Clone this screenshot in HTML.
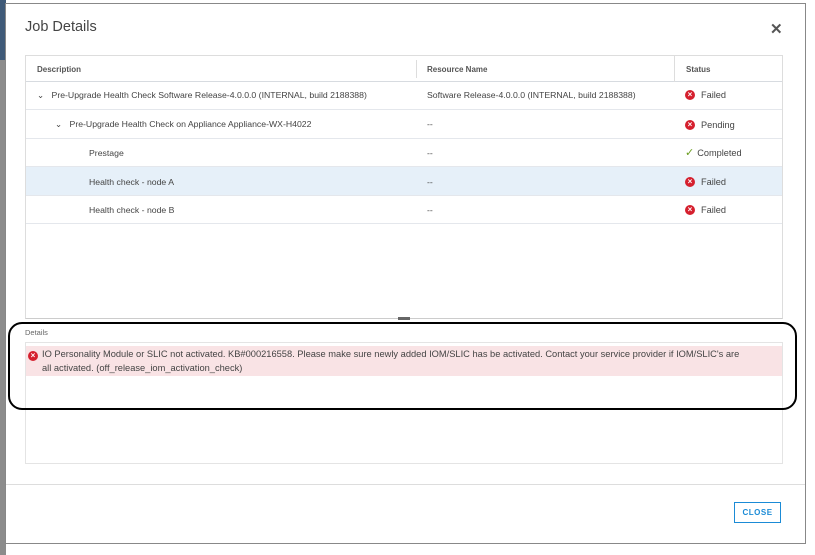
<!DOCTYPE html>
<html><head><style>
*{margin:0;padding:0;box-sizing:border-box}
body{width:815px;height:555px;background:#fff;position:relative;overflow:hidden;font-family:"Liberation Sans",sans-serif;color:#333}
.a{position:absolute}
.t{font-size:8.7px;color:#444;white-space:nowrap;line-height:11px}
.s{font-size:9.2px;display:flex;align-items:center;height:12px}
.ic{display:inline-block;width:10px;height:10px;border-radius:50%;background:#d5202e;color:#fff;font-size:8px;line-height:10px;text-align:center;font-weight:bold;margin-right:6px;flex:none}
.row{position:absolute;left:26px;width:756px;border-bottom:1px solid #e4e7ec}
</style></head><body>
<div class="a" style="left:0;top:0;width:6px;height:60px;background:#3f5a78"></div>
<div class="a" style="left:0;top:60px;width:6px;height:495px;background:#8c8c8c"></div>
<div class="a" style="left:5px;top:3px;width:801px;height:541px;border:1px solid #888;background:#fff"></div>
<div class="a" style="left:25px;top:19px;font-size:14.5px;color:#444">Job Details</div>
<div class="a" style="left:770px;top:20px;font-size:15px;color:#555;font-weight:bold">✕</div>
<div class="a" style="left:25px;top:55px;width:758px;height:264px;border:1px solid #ddd;border-bottom:1px solid #ccc"></div>
<div class="row" style="top:56px;height:26px;border-bottom:1px solid #d7dbe0"></div>
<div class="a" style="left:416px;top:60px;width:1px;height:18px;background:#ddd"></div>
<div class="a" style="left:674px;top:56px;width:1px;height:26px;background:#ddd"></div>
<div class="a t" style="left:37px;top:64px;font-size:8px;font-weight:bold;color:#555">Description</div>
<div class="a t" style="left:427px;top:64px;font-size:8px;font-weight:bold;color:#555">Resource Name</div>
<div class="a t" style="left:686px;top:64px;font-size:8px;font-weight:bold;color:#555">Status</div>
<div class="row" style="top:82px;height:28px"></div>
<div class="row" style="top:110px;height:29px"></div>
<div class="row" style="top:139px;height:28px"></div>
<div class="row" style="top:167px;height:29px;background:#e6f0f9"></div>
<div class="row" style="top:196px;height:28px"></div>
<div class="a t" style="left:37px;top:90px">⌄&nbsp;&nbsp; Pre-Upgrade Health Check Software Release-4.0.0.0 (INTERNAL, build 2188388)</div>
<div class="a t" style="left:427px;top:90px">Software Release-4.0.0.0 (INTERNAL, build 2188388)</div>
<div class="a t s" style="left:685px;top:89px"><span class="ic">×</span>Failed</div>
<div class="a t" style="left:55px;top:119px">⌄&nbsp;&nbsp; Pre-Upgrade Health Check on Appliance Appliance-WX-H4022</div>
<div class="a t" style="left:427px;top:119px">--</div>
<div class="a t s" style="left:685px;top:119px"><span class="ic">×</span>Pending</div>
<div class="a t" style="left:89px;top:148px">Prestage</div>
<div class="a t" style="left:427px;top:148px">--</div>
<div class="a t s" style="left:685px;top:147px"><span style="color:#6a9d1f;font-size:11px;margin-right:3px">✓</span>Completed</div>
<div class="a t" style="left:89px;top:177px">Health check - node A</div>
<div class="a t" style="left:427px;top:177px">--</div>
<div class="a t s" style="left:685px;top:176px"><span class="ic">×</span>Failed</div>
<div class="a t" style="left:89px;top:205px">Health check - node B</div>
<div class="a t" style="left:427px;top:205px">--</div>
<div class="a t s" style="left:685px;top:204px"><span class="ic">×</span>Failed</div>
<div class="a" style="left:398px;top:317px;width:12px;height:3px;background:#666"></div>
<div class="a t" style="left:25px;top:327px;font-size:7.5px;color:#666">Details</div>
<div class="a" style="left:25px;top:342px;width:758px;height:122px;border:1px solid #e4e4e4"></div>
<div class="a" style="left:26px;top:346px;width:756px;height:30px;background:#f9e3e5"></div>
<div class="a" style="left:28px;top:348px;font-size:9.3px;color:#444;line-height:13.5px;width:750px;white-space:nowrap"><span class="ic" style="margin-right:4px;display:inline-block;vertical-align:-1px">×</span>IO Personality Module or SLIC not activated. KB#000216558. Please make sure newly added IOM/SLIC has be activated. Contact your service provider if IOM/SLIC's are<br><span style="padding-left:14px">all activated. (off_release_iom_activation_check)</span></div>
<div class="a" style="left:8px;top:322px;width:789px;height:88px;border:2.5px solid #000;border-radius:14px"></div>
<div class="a" style="left:6px;top:484px;width:799px;height:1px;background:#ddd"></div>
<div class="a" style="left:734px;top:502px;width:47px;height:21px;border:1px solid #1b8bd6;color:#1b8bd6;font-size:8px;font-weight:bold;text-align:center;line-height:19px;letter-spacing:0.5px">CLOSE</div>
</body></html>
